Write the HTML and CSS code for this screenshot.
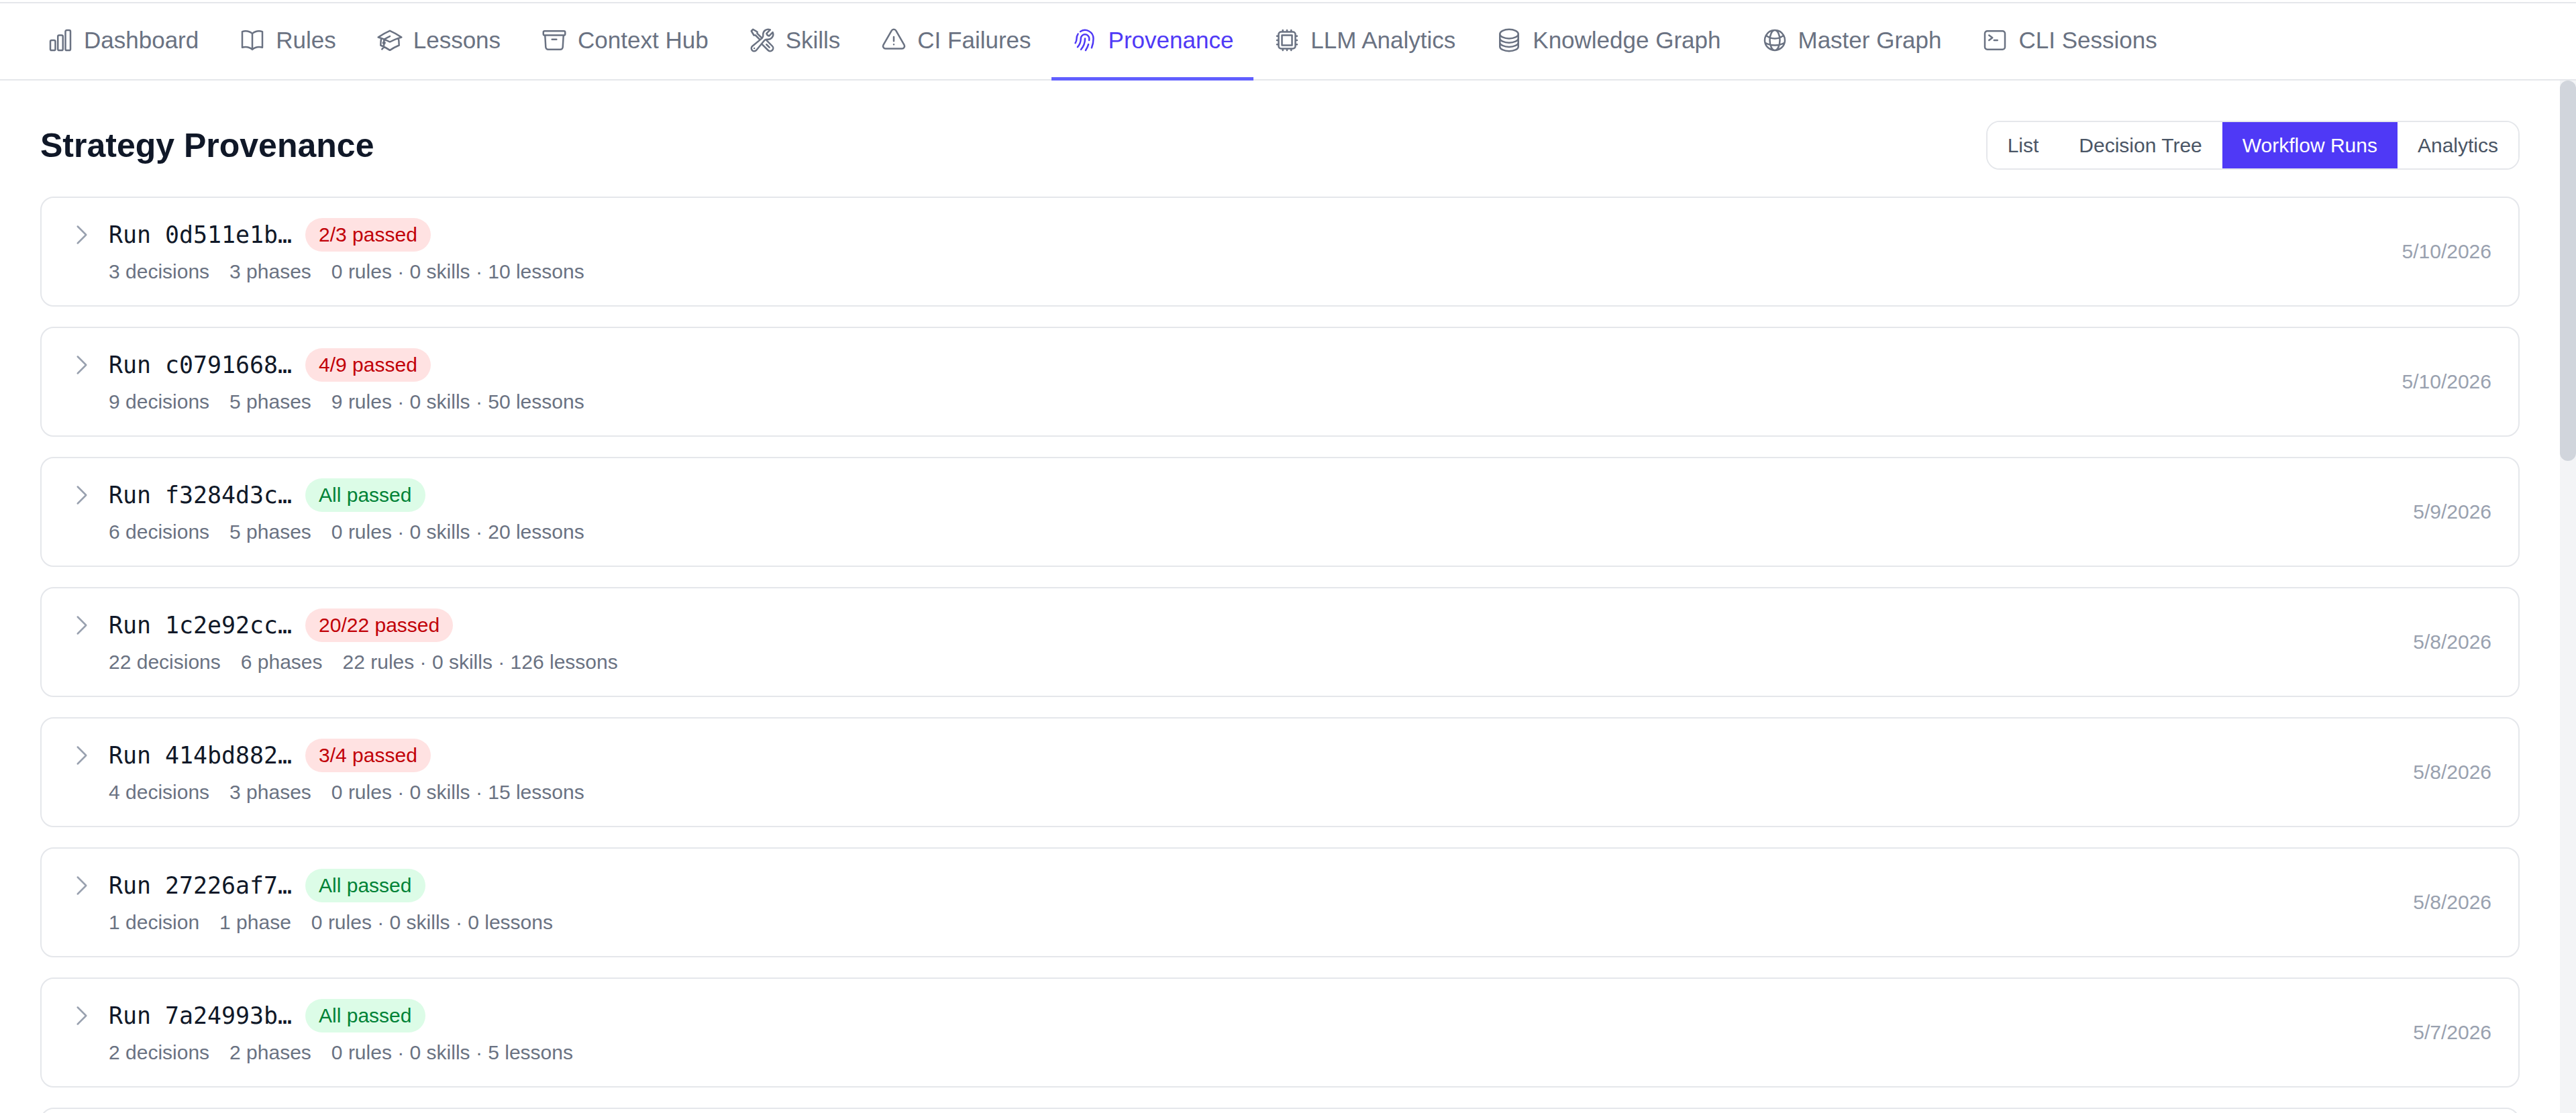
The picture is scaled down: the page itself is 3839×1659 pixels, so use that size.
FILE: index.html
```html
<!DOCTYPE html>
<html lang="en">
<head>
  <meta charset="UTF-8">
  <meta name="viewport" content="width=device-width, initial-scale=1.0">
  <title>Strategy Provenance</title>
  <link rel="stylesheet" href="styles.css">
</head>
<body>
  <nav class="tabs">
    <a class="tab"><svg class="icon" viewBox="0 0 24 24"><path d="M3 13.125C3 12.504 3.504 12 4.125 12h2.25c.621 0 1.125.504 1.125 1.125v6.75C7.5 20.496 6.996 21 6.375 21h-2.25A1.125 1.125 0 0 1 3 19.875v-6.75ZM9.75 8.625c0-.621.504-1.125 1.125-1.125h2.25c.621 0 1.125.504 1.125 1.125v11.25c0 .621-.504 1.125-1.125 1.125h-2.25a1.125 1.125 0 0 1-1.125-1.125V8.625ZM16.5 4.125c0-.621.504-1.125 1.125-1.125h2.25C20.496 3 21 3.504 21 4.125v15.75c0 .621-.504 1.125-1.125 1.125h-2.25a1.125 1.125 0 0 1-1.125-1.125V4.125Z"/></svg>Dashboard</a>
    <a class="tab"><svg class="icon" viewBox="0 0 24 24"><path d="M12 6.042A8.967 8.967 0 0 0 6 3.75c-1.052 0-2.062.18-3 .512v14.25A8.987 8.987 0 0 1 6 18c2.305 0 4.408.867 6 2.292m0-14.25a8.966 8.966 0 0 1 6-2.292c1.052 0 2.062.18 3 .512v14.25A8.987 8.987 0 0 0 18 18a8.967 8.967 0 0 0-6 2.292m0-14.25v14.25"/></svg>Rules</a>
    <a class="tab"><svg class="icon" viewBox="0 0 24 24"><path d="M4.26 10.147a60.438 60.438 0 0 0-.491 6.347A48.62 48.62 0 0 1 12 20.904a48.62 48.62 0 0 1 8.232-4.41 60.46 60.46 0 0 0-.491-6.347m-15.482 0a50.636 50.636 0 0 0-2.658-.813A59.906 59.906 0 0 1 12 3.493a59.903 59.903 0 0 1 10.399 5.84c-.896.248-1.783.52-2.658.814m-15.482 0A50.717 50.717 0 0 1 12 13.489a50.702 50.702 0 0 1 7.74-3.342M6.75 15a.75.75 0 1 0 0-1.5.75.75 0 0 0 0 1.5Zm0 0v-3.675A55.378 55.378 0 0 1 12 8.443m-7.007 11.55A5.981 5.981 0 0 0 6.75 15.75v-1.5"/></svg>Lessons</a>
    <a class="tab"><svg class="icon" viewBox="0 0 24 24"><path d="m20.25 7.5-.625 10.632a2.25 2.25 0 0 1-2.247 2.118H6.622a2.25 2.25 0 0 1-2.247-2.118L3.75 7.5M10 11.25h4M3.375 7.5h17.25c.621 0 1.125-.504 1.125-1.125v-1.5c0-.621-.504-1.125-1.125-1.125H3.375c-.621 0-1.125.504-1.125 1.125v1.5c0 .621.504 1.125 1.125 1.125Z"/></svg>Context Hub</a>
    <a class="tab"><svg class="icon" viewBox="0 0 24 24"><path d="M11.42 15.17 17.25 21A2.652 2.652 0 0 0 21 17.25l-5.877-5.877M11.42 15.17l2.496-3.03c.317-.384.74-.626 1.208-.766M11.42 15.17l-4.655 5.653a2.548 2.548 0 1 1-3.586-3.586l6.837-5.63m5.108-.233c.55-.164 1.163-.188 1.743-.14a4.5 4.5 0 0 0 4.486-6.336l-3.276 3.277a3.004 3.004 0 0 1-2.25-2.25l3.276-3.276a4.5 4.5 0 0 0-6.336 4.486c.091 1.076-.071 2.264-.904 2.95l-.102.085m-1.745 1.437L5.909 7.5H4.5L2.25 3.75l1.5-1.5L7.5 4.5v1.409l4.26 4.26m-1.745 1.437 1.745-1.437m6.615 8.206L15.75 15.75M4.867 19.125h.008v.008h-.008v-.008Z"/></svg>Skills</a>
    <a class="tab"><svg class="icon" viewBox="0 0 24 24"><path d="M12 9v3.75m-9.303 3.376c-.866 1.5.217 3.374 1.948 3.374h14.71c1.73 0 2.813-1.874 1.948-3.374L13.949 3.378c-.866-1.5-3.032-1.5-3.898 0L2.697 16.126ZM12 15.75h.007v.008H12v-.008Z"/></svg>CI Failures</a>
    <a class="tab active"><svg class="icon" viewBox="0 0 24 24"><path d="M7.864 4.243A7.5 7.5 0 0 1 19.5 10.5c0 2.92-.556 5.709-1.568 8.268M5.742 6.364A7.465 7.465 0 0 0 4.5 10.5a7.464 7.464 0 0 1-1.15 3.993m1.989 3.559A11.209 11.209 0 0 0 8.25 10.5a3.75 3.75 0 1 1 7.5 0c0 .527-.021 1.049-.064 1.565M12 10.5a14.94 14.94 0 0 1-3.6 9.75m6.633-4.596a18.666 18.666 0 0 1-2.485 5.33"/></svg>Provenance</a>
    <a class="tab"><svg class="icon" viewBox="0 0 24 24"><path d="M8.25 3v1.5M4.5 8.25H3m18 0h-1.5M4.5 12H3m18 0h-1.5m-15 3.75H3m18 0h-1.5M8.25 19.5V21M12 3v1.5m0 15V21m3.75-18v1.5m0 15V21m-9-1.5h10.5a2.25 2.25 0 0 0 2.25-2.25V6.75a2.25 2.25 0 0 0-2.25-2.25H6.75A2.25 2.25 0 0 0 4.5 6.75v10.5a2.25 2.25 0 0 0 2.25 2.25Zm.75-12h9v9h-9v-9Z"/></svg>LLM Analytics</a>
    <a class="tab"><svg class="icon" viewBox="0 0 24 24"><path d="M20.25 6.375c0 2.278-3.694 4.125-8.25 4.125S3.75 8.653 3.75 6.375m16.5 0c0-2.278-3.694-4.125-8.25-4.125S3.75 4.097 3.75 6.375m16.5 0v11.25c0 2.278-3.694 4.125-8.25 4.125s-8.25-1.847-8.25-4.125V6.375m16.5 0v3.75m-16.5-3.75v3.75m16.5 0v3.75C20.25 16.153 16.556 18 12 18s-8.25-1.847-8.25-4.125v-3.75m16.5 0c0 2.278-3.694 4.125-8.25 4.125s-8.25-1.847-8.25-4.125"/></svg>Knowledge Graph</a>
    <a class="tab"><svg class="icon" viewBox="0 0 24 24"><path d="M12 21a9.004 9.004 0 0 0 8.716-6.747M12 21a9.004 9.004 0 0 1-8.716-6.747M12 21c2.485 0 4.5-4.03 4.5-9S14.485 3 12 3m0 18c-2.485 0-4.5-4.03-4.5-9S9.515 3 12 3m0 0a8.997 8.997 0 0 1 7.843 4.582M12 3a8.997 8.997 0 0 0-7.843 4.582m15.686 0A11.953 11.953 0 0 1 12 10.5c-2.998 0-5.74-1.1-7.843-2.918m15.686 0A8.959 8.959 0 0 1 21 12c0 .778-.099 1.533-.284 2.253m0 0A17.919 17.919 0 0 1 12 16.5c-3.162 0-6.133-.815-8.716-2.247m0 0A9.015 9.015 0 0 1 3 12c0-1.605.42-3.113 1.157-4.418"/></svg>Master Graph</a>
    <a class="tab"><svg class="icon" viewBox="0 0 24 24"><path d="m6.75 7.5 3 2.25-3 2.25m4.5 0h3m-9 8.25h13.5A2.25 2.25 0 0 0 21 18V6a2.25 2.25 0 0 0-2.25-2.25H5.25A2.25 2.25 0 0 0 3 6v12a2.25 2.25 0 0 0 2.25 2.25Z"/></svg>CLI Sessions</a>
  </nav>

  <div class="page">
    <main class="content">
      <div class="heading">
        <h1>Strategy Provenance</h1>
        <div class="views">
          <button>List</button>
          <button>Decision Tree</button>
          <button class="selected">Workflow Runs</button>
          <button>Analytics</button>
        </div>
      </div>

      <div class="runs" id="runs"></div>
    </main>
    <div class="scrollbar"><div class="thumb"></div></div>
  </div>

  <script>
    const runs = [
      { id: '0d511e1b', passed: 2, decisions: 3, phases: 3, rules: 0, skills: 0, lessons: 10, date: '5/10/2026' },
      { id: 'c0791668', passed: 4, decisions: 9, phases: 5, rules: 9, skills: 0, lessons: 50, date: '5/10/2026' },
      { id: 'f3284d3c', passed: 6, decisions: 6, phases: 5, rules: 0, skills: 0, lessons: 20, date: '5/9/2026' },
      { id: '1c2e92cc', passed: 20, decisions: 22, phases: 6, rules: 22, skills: 0, lessons: 126, date: '5/8/2026' },
      { id: '414bd882', passed: 3, decisions: 4, phases: 3, rules: 0, skills: 0, lessons: 15, date: '5/8/2026' },
      { id: '27226af7', passed: 1, decisions: 1, phases: 1, rules: 0, skills: 0, lessons: 0, date: '5/8/2026' },
      { id: '7a24993b', passed: 2, decisions: 2, phases: 2, rules: 0, skills: 0, lessons: 5, date: '5/7/2026' }
    ];

    function plural(n, word) {
      return n + ' ' + word + (n === 1 ? '' : 's');
    }

    const list = document.getElementById('runs');
    runs.forEach(run => {
      const ok = run.passed === run.decisions;
      list.innerHTML += `
        <div class="run">
          <svg class="chevron" viewBox="0 0 24 24"><path d="m8.25 4.5 7.5 7.5-7.5 7.5"/></svg>
          <div class="info">
            <div class="top">
              <span class="name">Run ${run.id}…</span>
              <span class="badge ${ok ? 'pass' : 'fail'}">${ok ? 'All passed' : `${run.passed}/${run.decisions} passed`}</span>
            </div>
            <div class="stats">
              <span>${plural(run.decisions, 'decision')}</span>
              <span>${plural(run.phases, 'phase')}</span>
              <span>${run.rules} rules · ${run.skills} skills · ${run.lessons} lessons</span>
            </div>
          </div>
          <span class="date">${run.date}</span>
        </div>`;
    });
    // next run, below the fold
    list.innerHTML += '<div class="run"></div>';
  </script>
</body>
</html>
```
FILE: styles.css
```css
* {
  box-sizing: border-box;
}
body {
  margin: 0;
  height: 100vh;
  padding-top: 3px;
  display: flex;
  flex-direction: column;
  overflow: hidden;
  background: #fff;
  color: #101828;
  font-family: "Liberation Sans", Arial, sans-serif;
}
svg {
  fill: none;
  stroke: currentColor;
  stroke-width: 1.5;
  stroke-linecap: round;
  stroke-linejoin: round;
  flex-shrink: 0;
}
.tabs {
  display: flex;
  height: 117px;
  flex-shrink: 0;
  padding: 0 40px;
  border-top: 2px solid #e5e7eb;
  box-shadow: inset 0 -2px #e5e7eb;
}
.tab {
  display: flex;
  align-items: center;
  gap: 15px;
  padding: 0 30px;
  border-bottom: 5px solid transparent;
  font-size: 35px;
  color: #6a7282;
  white-space: nowrap;
}
.tab.active {
  color: #4f39f6;
  border-color: #615fff;
}
.icon {
  width: 40px;
  height: 40px;
}
.page {
  display: flex;
  flex: 1;
  min-height: 0;
}
.content {
  flex: 1;
  padding: 60px 60px 0;
  overflow: hidden;
}
.heading {
  display: flex;
  justify-content: space-between;
  align-items: center;
  margin-bottom: 40px;
}
h1 {
  margin: 0;
  font-size: 50px;
  line-height: 70px;
}
.views {
  display: flex;
  height: 73px;
  border: 2px solid #e5e7eb;
  border-radius: 20px;
  overflow: hidden;
}
.views button {
  padding: 0 30px;
  border: none;
  background: #fff;
  color: #4a5565;
  font-family: inherit;
  font-size: 30px;
}
.views .selected {
  background: #4f39f6;
  color: #fff;
}
.runs {
  display: flex;
  flex-direction: column;
  gap: 30px;
}
.run {
  display: flex;
  align-items: center;
  height: 164px;
  flex-shrink: 0;
  padding: 30px 40px;
  border: 2px solid #e5e7eb;
  border-radius: 20px;
}
.chevron {
  width: 40px;
  height: 40px;
  margin-right: 20px;
  align-self: flex-start;
  margin-top: 5px;
  color: #99a1af;
}
.info {
  flex: 1;
}
.top {
  display: flex;
  align-items: center;
  gap: 20px;
}
.name {
  font-family: "DejaVu Sans Mono", monospace;
  font-size: 34.9px;
  line-height: 50px;
}
.badge {
  padding: 5px 20px;
  border-radius: 25px;
  font-size: 30px;
  line-height: 40px;
}
.fail {
  background: #ffe2e2;
  color: #c10007;
}
.pass {
  background: #dcfce7;
  color: #008236;
}
.stats {
  display: flex;
  gap: 30px;
  margin-top: 10px;
  font-size: 30px;
  line-height: 40px;
  color: #6a7282;
}
.date {
  font-size: 30px;
  color: #99a1af;
}
.scrollbar {
  width: 24px;
  background: #f3f4f6;
}
.thumb {
  height: 567px;
  border-radius: 12px;
  background: #d1d5dc;
}
```
